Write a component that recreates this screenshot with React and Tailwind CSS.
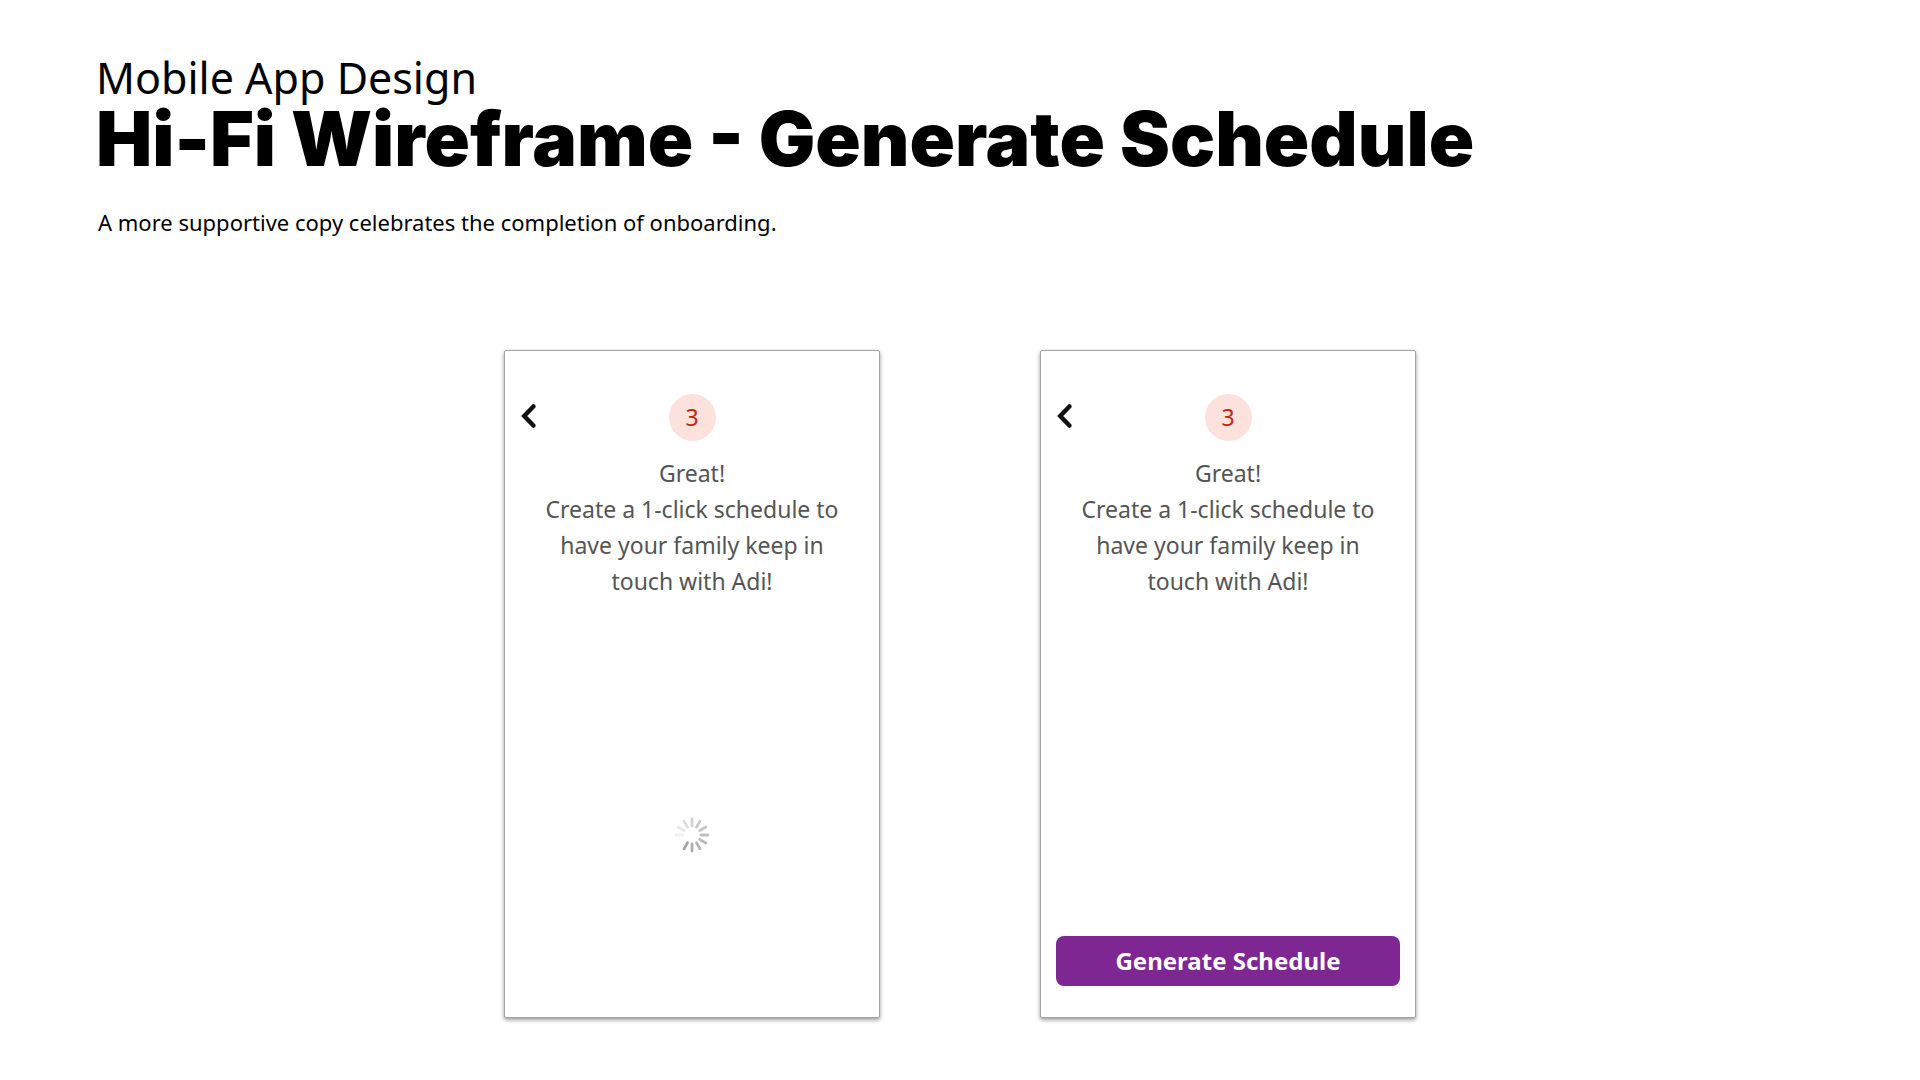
const SPOKES = [
  { angle: 0, color: "#d2d2d2" },
  { angle: 30, color: "#cacaca" },
  { angle: 60, color: "#c6c6c6" },
  { angle: 90, color: "#c0c0c0" },
  { angle: 120, color: "#bababa" },
  { angle: 150, color: "#b4b4b4" },
  { angle: 180, color: "#adadad" },
  { angle: 210, color: "#a4a4a4" },
  { angle: 270, color: "#f0f0f0" },
  { angle: 300, color: "#e8e8e8" },
  { angle: 330, color: "#dddddd" },
];

function Spinner() {
  return (
    <svg className="w-9 h-9" viewBox="0 0 36 36" role="img" aria-label="Loading">
      {SPOKES.map(({ angle, color }) => (
        <path
          key={angle}
          d="M18 2v7"
          stroke={color}
          strokeWidth="2.8"
          strokeLinecap="round"
          transform={`rotate(${angle} 18 18)`}
        />
      ))}
    </svg>
  );
}

function PhoneScreen({ children }) {
  return (
    <section className="w-94 min-h-167 flex flex-col bg-white border border-[#a3a3a3] rounded-xs shadow-[0_2px_4px_rgba(0,0,0,0.4)]">
      {/* Step bar */}
      <div className="grid grid-cols-[1fr_auto_1fr] items-center pt-[43px] px-4">
        <button type="button" aria-label="Back" className="justify-self-start pb-1">
          <svg className="w-4 h-6" viewBox="0 0 16 24" fill="none">
            <path d="M12.4 2.4 3.2 12l9.2 9.6" stroke="#111" strokeWidth="4.4" strokeLinecap="round" />
          </svg>
        </button>
        <span className="w-[47px] h-[47px] flex items-center justify-center rounded-full bg-[#fde1dd] text-[23px] text-[#c3260c]">
          3
        </span>
      </div>

      <p className="mt-3.5 px-8 text-center text-[23px] leading-9 text-[#555]">
        Great!
        <br />
        Create a 1-click schedule to
        <br />
        have your family keep in
        <br />
        touch with Adi!
      </p>

      {children}
    </section>
  );
}

export default function App() {
  return (
    <div className="min-h-screen bg-white text-black font-['Noto_Sans',sans-serif]">
      <header className="px-24 pt-13">
        <p className="text-[43px] leading-13">Mobile App Design</p>
        <h1 className="text-[75px] leading-[70px] font-black font-['Inter',sans-serif]">
          Hi-Fi Wireframe - Generate Schedule
        </h1>
        <p className="mt-8 pl-0.5 text-[22px] leading-8">
          A more supportive copy celebrates the completion of onboarding.
        </p>
      </header>

      <main className="mt-28 pb-14 flex flex-wrap justify-center gap-40">
        <PhoneScreen>
          <div className="mt-auto mb-41 flex justify-center">
            <Spinner />
          </div>
        </PhoneScreen>

        <PhoneScreen>
          <button
            type="button"
            className="mt-auto mb-[31px] mx-[15px] h-[50px] rounded-lg bg-[#7e2793] text-2xl font-bold text-white"
          >
            Generate Schedule
          </button>
        </PhoneScreen>
      </main>
    </div>
  );
}
